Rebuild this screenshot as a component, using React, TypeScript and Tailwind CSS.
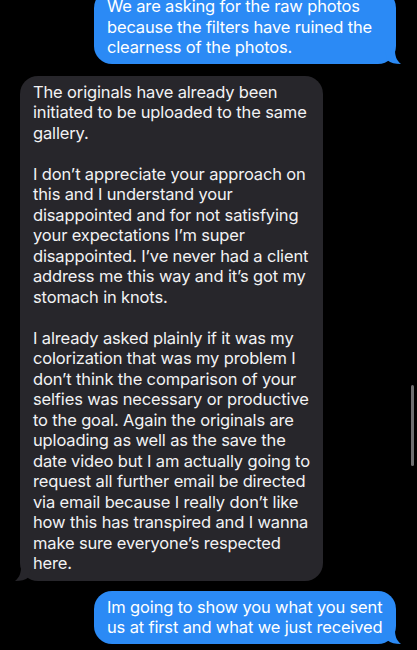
import React from 'react';

const font = { fontFamily: 'Inter, "Noto Sans", sans-serif' };

function Lines({ lines }: { lines: string[] }) {
  return (
    <>
      {lines.map((l, i) =>
        l === '' ? (
          <div key={i} className="h-[20.5px]" />
        ) : (
          <div key={i} className="whitespace-nowrap">
            {l}
          </div>
        )
      )}
    </>
  );
}

// iMessage style tail, mirrored for incoming bubbles
function Tail({ color, side }: { color: string; side: 'left' | 'right' }) {
  return (
    <svg
      width="16"
      height="14"
      viewBox="0 0 16 14"
      className={`absolute bottom-0 ${side === 'right' ? '-right-[5px]' : '-left-[5px] -scale-x-100'}`}
    >
      <path d="M0 0 L10 0 C10 5 11 10 16 14 C10 14 6 13 2 10 Z" fill={color} />
    </svg>
  );
}

function Sent({ lines }: { lines: string[] }) {
  return (
    <div className="flex justify-end pr-[21px]">
      <div className="relative w-[302px] rounded-[18px] bg-[#2b8af5] pl-[13px] pr-3 pt-[6px] pb-[6px] text-white">
        <Lines lines={lines} />
        <Tail color="#2b8af5" side="right" />
      </div>
    </div>
  );
}

export default function App() {
  return (
    <div
      className="relative flex h-[650px] w-[417px] flex-col overflow-hidden bg-black text-[16.5px] leading-[20.5px] tracking-[-0.15px]"
      style={font}
    >
      <div className="-mt-[10px] flex flex-col gap-[12px]">
        <Sent
          lines={[
            'We are asking for the raw photos',
            'because the filters have ruined the',
            'clearness of the photos.',
          ]}
        />

        <div className="flex pl-[20px]">
          <div className="relative w-[303px] rounded-[18px] bg-[#27262b] pl-[13px] pr-3 pt-[6px] pb-[7px] text-[#f2f2f4]">
            <Lines
              lines={[
                'The originals have already been',
                'initiated to be uploaded to the same',
                'gallery.',
                '',
                'I don’t appreciate your approach on',
                'this and I understand your',
                'disappointed and for not satisfying',
                'your expectations I’m super',
                'disappointed. I’ve never had a client',
                'address me this way and it’s got my',
                'stomach in knots.',
                '',
                'I already asked plainly if it was my',
                'colorization that was my problem I',
                'don’t think the comparison of your',
                'selfies was necessary or productive',
                'to the goal. Again the originals are',
                'uploading as well as the save the',
                'date video but I am actually going to',
                'request all further email be directed',
                'via email because I really don’t like',
                'how this has transpired and I wanna',
                'make sure everyone’s respected',
                'here.',
              ]}
            />
            <Tail color="#27262b" side="left" />
          </div>
        </div>
      </div>

      <div className="mt-[10px]">
        <Sent lines={['Im going to show you what you sent', 'us at first and what we just received']} />
      </div>

      {/* scroll indicator */}
      <div className="absolute right-[3px] top-[385px] h-[81px] w-[3px] rounded-full bg-[#6e6e70]" />
    </div>
  );
}
